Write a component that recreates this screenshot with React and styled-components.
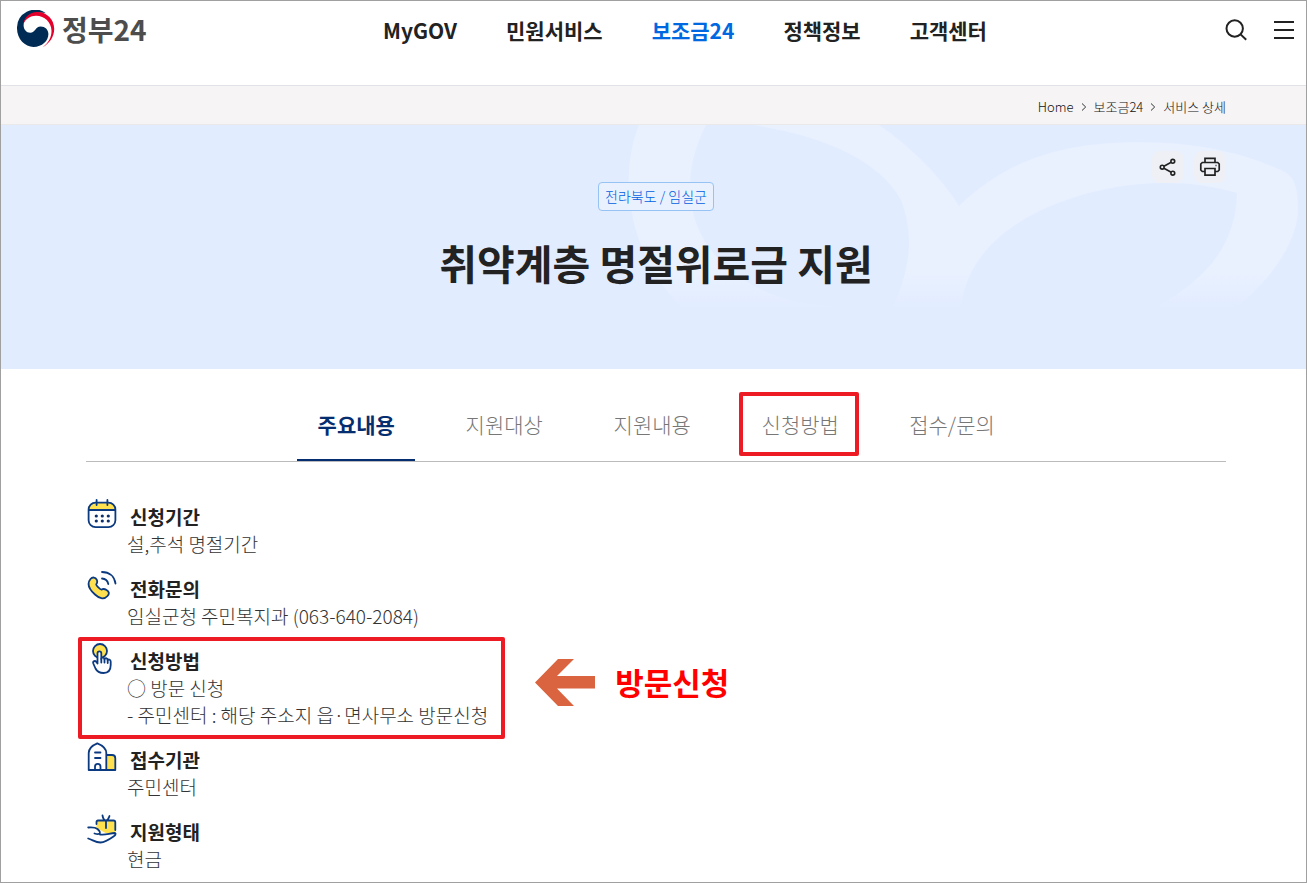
import React from 'react';
import styled, { createGlobalStyle } from 'styled-components';

const NAV_ITEMS = ['MyGOV', '민원서비스', '보조금24', '정책정보', '고객센터'];
const ACTIVE_NAV = '보조금24';

const TABS = ['주요내용', '지원대상', '지원내용', '신청방법', '접수/문의'];
const ACTIVE_TAB = '주요내용';
const MARKED_TAB = '신청방법';

const DETAILS = [
  { title: '신청기간', icon: CalendarIcon, lines: ['설,추석 명절기간'] },
  { title: '전화문의', icon: PhoneIcon, lines: ['임실군청 주민복지과 (063-640-2084)'] },
  {
    title: '신청방법',
    icon: TouchIcon,
    lines: ['○ 방문 신청', '- 주민센터 : 해당 주소지 읍·면사무소 방문신청'],
    note: '방문신청',
  },
  { title: '접수기관', icon: BuildingIcon, lines: ['주민센터'] },
  { title: '지원형태', icon: GiftIcon, lines: ['현금'] },
];

function App() {
  return (
    <Page>
      <GlobalStyle />
      <Header>
        <Logo href="#">
          <LogoMark />
          정부24
        </Logo>
        <Nav>
          {NAV_ITEMS.map(item => (
            <NavLink key={item} href="#" $active={item === ACTIVE_NAV}>{item}</NavLink>
          ))}
        </Nav>
        <HeaderTools>
          <PlainButton type="button" aria-label="검색">
            <svg width="24" height="24" viewBox="0 0 24 24" fill="none" stroke="#222" strokeWidth="2">
              <circle cx="10.7" cy="10.5" r="8.2" />
              <path d="M16.6 16.4l5.6 5.4" />
            </svg>
          </PlainButton>
          <PlainButton type="button" aria-label="전체메뉴">
            <svg width="22" height="24" viewBox="0 0 22 24" stroke="#222" strokeWidth="2">
              <path d="M1 4h20M1 12h20M1 20h20" />
            </svg>
          </PlainButton>
        </HeaderTools>
      </Header>

      <Breadcrumb>
        <Crumb href="#">Home</Crumb>
        <CrumbArrow />
        <Crumb href="#">보조금24</Crumb>
        <CrumbArrow />
        <Crumb href="#">서비스 상세</Crumb>
      </Breadcrumb>

      <Hero>
        <HeroPattern />
        <HeroTools>
          <ToolButton type="button" aria-label="공유">
            <ShareIcon />
          </ToolButton>
          <ToolButton type="button" aria-label="인쇄">
            <PrintIcon />
          </ToolButton>
        </HeroTools>
        <Region>전라북도 / 임실군</Region>
        <Title>취약계층 명절위로금 지원</Title>
      </Hero>

      <Content>
        <TabBar role="tablist">
          {TABS.map(tab => (
            <Tab
              key={tab}
              type="button"
              role="tab"
              aria-selected={tab === ACTIVE_TAB}
              $active={tab === ACTIVE_TAB}
              $marked={tab === MARKED_TAB}
            >
              {tab}
            </Tab>
          ))}
        </TabBar>

        <DetailList>
          {DETAILS.map(({ title, icon: Icon, lines, note }) => (
            <DetailItem key={title} $marked={Boolean(note)}>
              <Icon />
              <DetailText>
                <DetailTitle>{title}</DetailTitle>
                {lines.map(line => <DetailLine key={line}>{line}</DetailLine>)}
              </DetailText>
              {note && (
                <Note>
                  <NoteArrow />
                  {note}
                </Note>
              )}
            </DetailItem>
          ))}
        </DetailList>
      </Content>
    </Page>
  );
}

// --- Icons ---
function LogoMark() {
  return (
    <svg width="38" height="38" viewBox="0 0 38 38">
      <path d="M29 3.2A18.3 18.3 0 0 0 0 18.5C0 29 8 36.9 16.5 36.9C25 36.9 31.4 31 31.4 24C31.4 19.400 28 16.400 23.700 16.400C18 16.400 18.500 22.700 13.200 22.700C9.400 22.700 6.600 19.500 6.600 15.200C6.600 9 12.500 3.600 20 2.900C23.500 2.600 26.500 2.700 29 3.200Z" fill="#002b54" />
      <path d="M6.600 13.400C7.400 7 12.800 2.300 19.800 2C30 1.800 37.200 9.500 37.200 18.800C37.200 27 32.500 33.500 25.700 37.200C31.500 33 34.700 27.200 34.500 20.500C34.200 12 27.500 5.600 19 5.700C13.200 5.800 9 8.800 6.600 13.400Z" fill="#e4002b" />
    </svg>
  );
}

function CrumbArrow() {
  return (
    <svg width="6" height="8" viewBox="0 0 6 8" fill="none" stroke="#333" aria-hidden="true">
      <path d="M1 0.5L4.7 4L1 7.5" />
    </svg>
  );
}

function ShareIcon() {
  return (
    <svg width="20" height="20" viewBox="0 0 20 20" fill="none" stroke="#222" strokeWidth="1.6">
      <circle cx="4.2" cy="10.2" r="1.9" />
      <circle cx="14.8" cy="4.3" r="1.9" />
      <circle cx="14.8" cy="16.2" r="1.9" />
      <path d="M5.900 9.200l7.300-4M5.900 11.200l7.300 4" />
    </svg>
  );
}

function PrintIcon() {
  return (
    <svg width="22" height="22" viewBox="0 0 22 22" fill="none" stroke="#222" strokeWidth="1.7">
      <path d="M6 6.5V2.300h10v4.200" />
      <path d="M6 15.500H3.300L1.800 14V8l1.500-1.500h15.400L20.200 8v6l-1.500 1.500H16" />
      <path d="M6 12.500h10v6.700H6z" />
      <path d="M16.500 9.500h1" />
    </svg>
  );
}

function CalendarIcon() {
  return (
    <DetailIcon viewBox="0 0 32 32">
      <path d="M3 12C3 6.5 5.5 4.5 10 4.5h12c4.500 0 7 2 7 7.500Z" fill="#ffe04f" stroke="none" />
      <rect x="2.600" y="4.600" width="26.800" height="24.600" rx="7" />
      <path d="M3 12h26M10.600 2v5M21.400 2v5" />
      <g fill="#0b2f6e" stroke="none">
        <circle cx="10.300" cy="18" r="1.600" />
        <circle cx="16.300" cy="18" r="1.600" />
        <circle cx="22.300" cy="18" r="1.600" />
        <circle cx="10.300" cy="23" r="1.600" />
        <circle cx="16.300" cy="23" r="1.600" />
        <circle cx="22.300" cy="23" r="1.600" />
      </g>
    </DetailIcon>
  );
}

function PhoneIcon() {
  return (
    <DetailIcon viewBox="0 0 32 32">
      <path
        d="M4.500 9C6.500 6.700 9.500 7.200 10.700 9.700C11.800 12 11.300 13 10.300 14.300C9.700 15.300 14.500 20 15.600 19.600C17 18.600 18.600 18.800 20.500 20C23.200 21.700 23.600 23.600 21.500 26C18.500 29.500 14 29.300 9 24.500C3.500 19.500 0.500 13.700 4.500 9Z"
        fill="#ffe04f"
      />
      <path d="M16 8.500C19.500 8.700 21.500 10.500 22.300 14M16 2C23.500 2 28.500 6.500 29.500 13.500" />
    </DetailIcon>
  );
}

function TouchIcon() {
  return (
    <DetailIcon viewBox="0 0 32 32">
      <circle cx="14" cy="9" r="7" fill="#ffe04f" />
      <path
        d="M11.500 21.500V11.300C11.500 8.800 15.300 8.800 15.300 11.300V17C15.300 15 18.500 15 18.500 17.300C18.700 15.700 21.700 15.800 21.700 18.200C22 17 24.700 17.200 24.700 19.500V23C24.700 28 22 31 17.500 31C13 31 11 29.500 9.500 26.500L7.300 21.500C6.500 19 9.500 18.200 10.300 20Z"
        fill="#fff"
      />
      <path d="M15.300 17v3.500M18.500 17.500v3M21.700 18.500v2.500" />
    </DetailIcon>
  );
}

function BuildingIcon() {
  return (
    <DetailIcon viewBox="0 0 32 32">
      <path d="M20 14h6c2 0 3.300 1.300 3.300 3.300V29H20Z" fill="#ffe04f" />
      <path d="M2.700 29V12C2.700 8 6 4.500 11.300 2.300C16.700 4.500 20.300 8 20.300 12V29Z" fill="#fff" />
      <path d="M9 11.500h5.500M9 17h5.500M9 29v-3.500c0-3.500 5.500-3.500 5.500 0V29" />
    </DetailIcon>
  );
}

function GiftIcon() {
  return (
    <DetailIcon viewBox="0 0 32 32">
      <path d="M10.500 8h17c1.500 0 2 .5 2 2v10h-10l-9-5Z" fill="#ffe04f" stroke="none" />
      <path d="M10.500 11V9c0-1 .5-1.500 1.500-1.500h15.500c1.300 0 1.800.5 1.800 1.800V17M20 7.500V15M20 7.500c-2 0-3-2-3.500-5M20 7.500c2 0 2.500-2 3.500-4.500" />
      <path d="M2.200 14.500C6 14.200 9 14 11.500 16C13.500 18 14.500 18.500 14 20C13.500 21.500 10.500 21 8.500 20.500M14 21.500C19 22.500 23 20.500 29 20C30.500 21 29 22.500 27.500 23.500C22.500 27 18.500 29.300 14.500 29.500C9.500 29.500 7 27 2.200 25.500" />
    </DetailIcon>
  );
}

function NoteArrow() {
  return (
    <svg width="60" height="47" viewBox="0 0 60 47" aria-hidden="true">
      <path d="M0 23.500L23 0H39L22 17H60V29.500H22L39 47H23Z" fill="#d9643f" />
    </svg>
  );
}

function HeroPattern() {
  return (
    <Pattern viewBox="0 0 680 190" aria-hidden="true">
      <defs>
        <linearGradient id="fade" x1="0" y1="0" x2="0" y2="190" gradientUnits="userSpaceOnUse">
          <stop offset="0.78" stopColor="#e9f1ff" />
          <stop offset="0.97" stopColor="#e9f1ff" stopOpacity="0" />
        </linearGradient>
      </defs>
      <path
        fill="url(#fade)"
        d="M13 0C-9 55 3 135 63 190H225L200 180C160 178 125 165 97 138C60 105 54 50 80 0Z"
      />
      <path
        fill="url(#fade)"
        d="M127 0H253C285 22 315 52 333 81C390 25 460 14 540 18C590 21 625 32 655 45C668 51 672 60 672 85C671 120 640 162 600 190H515C575 160 610 125 611 68C570 56 530 56 490 62C400 78 335 125 335 190H263C281 155 291 115 275 75C254 35 195 10 127 0Z"
      />
    </Pattern>
  );
}

// --- Styles ---
const GlobalStyle = createGlobalStyle`
  * {
    box-sizing: border-box;
  }

  body {
    margin: 0;
    background: #fff;
    color: #222;
    font-family: 'Noto Sans CJK KR', sans-serif;
  }

  button {
    font-family: inherit;
  }
`;

const Page = styled.div`
  min-height: 100vh;
  border: 1px solid #a0a0a0;
`;

const Header = styled.header`
  display: grid;
  grid-template-columns: 1fr auto 1fr;
  align-items: start;
  height: 85px;
  padding: 8px 11px 0 16px;
  border-bottom: 1px solid #e1e2e8;
`;

const Logo = styled.a`
  display: flex;
  align-items: center;
  gap: 7px;
  color: #4d4d4d;
  font-size: 28px;
  font-weight: 700;
  line-height: 40px;
  text-decoration: none;
`;

const Nav = styled.nav`
  display: flex;
  gap: 49px;
  padding-left: 58px;
`;

const NavLink = styled.a`
  color: ${({ $active }) => ($active ? '#0068e0' : '#222')};
  font-size: 21px;
  font-weight: 700;
  line-height: 42px;
  text-decoration: none;
`;

const HeaderTools = styled.div`
  display: flex;
  justify-content: flex-end;
  gap: 25px;
  padding-top: 9px;
`;

const PlainButton = styled.button`
  display: flex;
  padding: 0;
  border: 0;
  background: none;
  cursor: pointer;
`;

const Breadcrumb = styled.nav`
  display: flex;
  align-items: center;
  justify-content: flex-end;
  gap: 7px;
  height: 39px;
  padding: 3px 80px 0 85px;
  border-bottom: 1px solid #ebe8ea;
  background: #f6f4f5;
`;

const Crumb = styled.a`
  color: #111;
  font-size: 13px;
  font-weight: 300;
  line-height: 20px;
  text-decoration: none;
`;

const Hero = styled.section`
  position: relative;
  display: flex;
  flex-direction: column;
  align-items: center;
  height: 244px;
  padding: 57px 80px 0 85px;
  background: #e1ecff;
`;

const Pattern = styled.svg`
  position: absolute;
  top: 0;
  right: 0;
  width: 680px;
  height: 190px;
`;

const HeroTools = styled.div`
  position: absolute;
  top: 26px;
  right: 80px;
  display: flex;
  gap: 10px;
`;

const ToolButton = styled.button`
  display: flex;
  align-items: center;
  justify-content: center;
  width: 32px;
  height: 32px;
  padding: 0;
  border: 0;
  border-radius: 8px;
  background: #eef0f5;
  cursor: pointer;
`;

const Region = styled.span`
  position: relative;
  padding: 0 6px 1px;
  border: 1px solid #96c3f3;
  border-radius: 4px;
  background: #e9f1ff;
  color: #0060e0;
  font-size: 14px;
  font-weight: 300;
  line-height: 26px;
`;

const Title = styled.h1`
  position: relative;
  margin: 21px 0 0;
  font-size: 41px;
  font-weight: 700;
  line-height: 60px;
`;

const Content = styled.main`
  padding: 23px 80px 6px 85px;
`;

const TabBar = styled.div`
  display: flex;
  justify-content: center;
  gap: 30px;
  border-bottom: 1px solid #bbb;
`;

const Tab = styled.button`
  position: relative;
  min-width: 118px;
  height: 69px;
  padding: 0 20px 3px;
  border: 0;
  border-bottom: 2px solid ${({ $active }) => ($active ? '#052e70' : 'transparent')};
  background: none;
  color: ${({ $active }) => ($active ? '#052e70' : '#777')};
  font-size: 21px;
  font-weight: ${({ $active }) => ($active ? 700 : 300)};
  cursor: pointer;

  &::after {
    content: '';
    display: ${({ $marked }) => ($marked ? 'block' : 'none')};
    position: absolute;
    inset: 0 0 3px -2px;
    border: 4px solid #ed1c24;
    border-radius: 2px;
  }
`;

const DetailList = styled.ul`
  display: flex;
  flex-direction: column;
  align-items: flex-start;
  gap: 18px;
  margin: 0;
  padding: 41px 0 0;
  list-style: none;
`;

const DetailItem = styled.li`
  position: relative;
  display: flex;
  gap: 9px;

  &::after {
    content: '';
    display: ${({ $marked }) => ($marked ? 'block' : 'none')};
    position: absolute;
    inset: -10px -17px -11px -8px;
    border: 4px solid #ed1c24;
    border-radius: 2px;
  }
`;

const DetailIcon = styled.svg`
  width: 32px;
  height: 32px;
  margin-top: -5px;
  fill: none;
  stroke: #0b3a80;
  stroke-width: 1.8;
  stroke-linecap: round;
  stroke-linejoin: round;
`;

const DetailText = styled.div`
  line-height: 27px;
`;

const DetailTitle = styled.h2`
  margin: 0;
  padding-left: 3px;
  font-size: 19px;
  font-weight: 700;
`;

const DetailLine = styled.p`
  margin: 0;
  color: #333;
  font-size: 19px;
  font-weight: 300;
`;

const Note = styled.strong`
  position: absolute;
  top: 11px;
  left: calc(100% + 47px);
  display: flex;
  align-items: center;
  gap: 20px;
  color: #f00;
  font-size: 31px;
  line-height: 48px;
  white-space: nowrap;
`;

export default App;
